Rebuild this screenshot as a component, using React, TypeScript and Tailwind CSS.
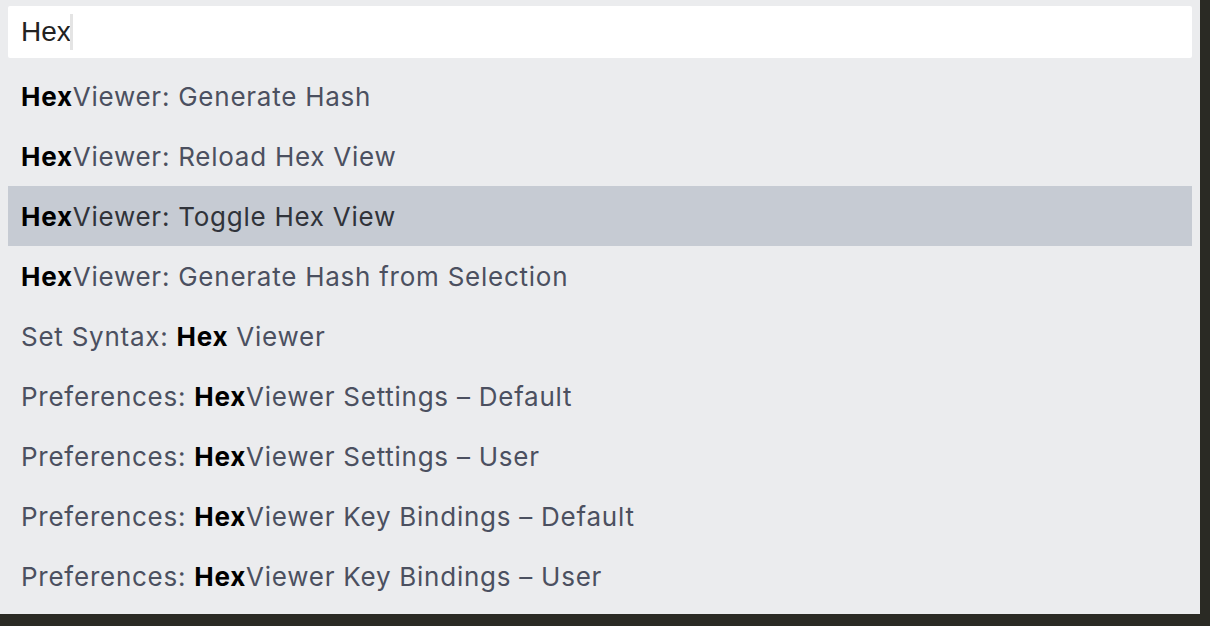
import React from "react";

type Item = { parts: { t: string; b?: boolean }[] };

const items: Item[] = [
  { parts: [{ t: "Hex", b: true }, { t: "Viewer: Generate Hash" }] },
  { parts: [{ t: "Hex", b: true }, { t: "Viewer: Reload Hex View" }] },
  { parts: [{ t: "Hex", b: true }, { t: "Viewer: Toggle Hex View" }] },
  { parts: [{ t: "Hex", b: true }, { t: "Viewer: Generate Hash from Selection" }] },
  { parts: [{ t: "Set Syntax: " }, { t: "Hex", b: true }, { t: " Viewer" }] },
  { parts: [{ t: "Preferences: " }, { t: "Hex", b: true }, { t: "Viewer Settings – Default" }] },
  { parts: [{ t: "Preferences: " }, { t: "Hex", b: true }, { t: "Viewer Settings – User" }] },
  { parts: [{ t: "Preferences: " }, { t: "Hex", b: true }, { t: "Viewer Key Bindings – Default" }] },
  { parts: [{ t: "Preferences: " }, { t: "Hex", b: true }, { t: "Viewer Key Bindings – User" }] },
];

export default function App() {
  return (
    <div
      className="w-[1210px] h-[626px] bg-[#2a2a24] overflow-hidden"
      style={{ fontFamily: "Inter, 'Noto Sans', sans-serif" }}
    >
      <div className="w-[1200px] h-[614px] bg-[#ebecee] px-2 pt-[6px] flex flex-col">
        <div className="h-[52px] bg-white rounded-[2px] flex items-center pl-[13px]">
          <span
            className="text-[28px] text-[#222] leading-none"
            style={{ fontFamily: "'Liberation Sans', Arial, sans-serif" }}
          >
            Hex
          </span>
          <span className="w-[3px] h-[36px] bg-[#e4e4e4] -ml-[1px]" />
        </div>
        <div className="mt-2 flex flex-col">
          {items.map((it, i) => (
            <div
              key={i}
              className={`h-[60px] flex items-center pl-[13px] pt-[1px] text-[26px] tracking-[0.75px] whitespace-pre ${
                i === 2 ? "bg-[#c6cbd3] text-[#30333a]" : "text-[#4b5060]"
              }`}
            >
              {it.parts.map((p, j) =>
                p.b ? (
                  <span key={j} className="font-bold text-black">
                    {p.t}
                  </span>
                ) : (
                  <span key={j}>{p.t}</span>
                )
              )}
            </div>
          ))}
        </div>
      </div>
    </div>
  );
}
